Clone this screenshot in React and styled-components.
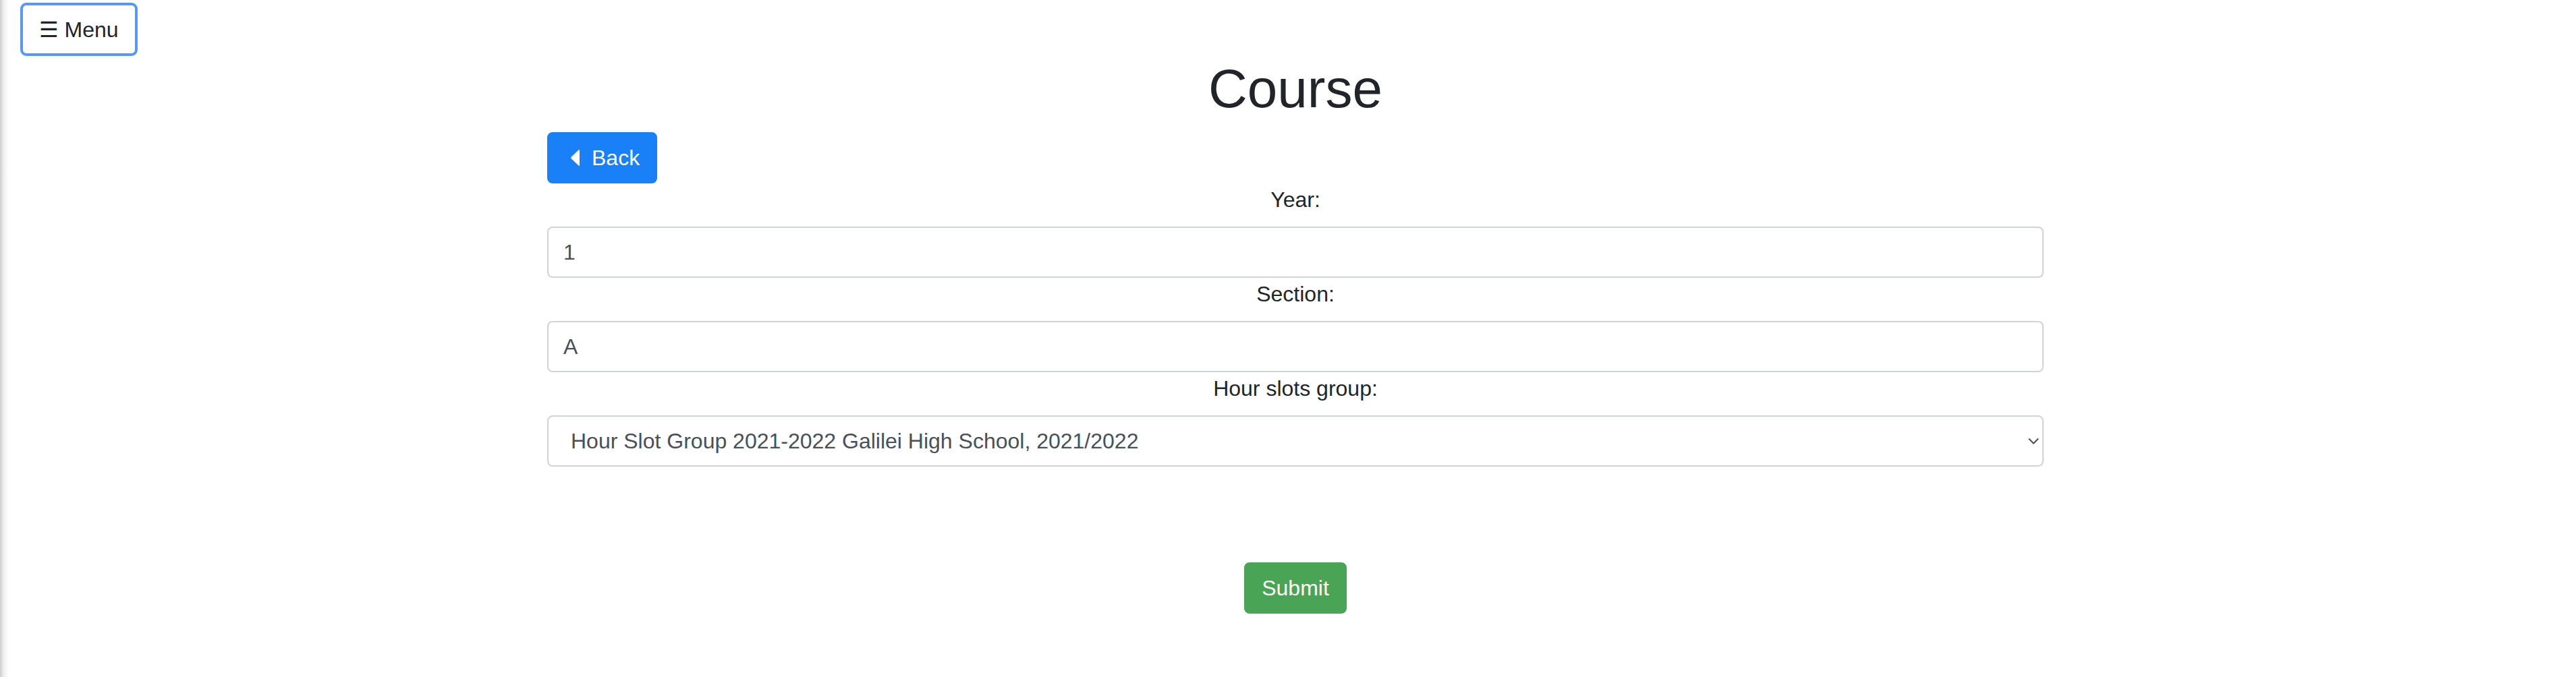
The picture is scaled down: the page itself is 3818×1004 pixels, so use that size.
import React, {useState} from 'react';
import styled, {createGlobalStyle} from 'styled-components';

const GlobalStyle = createGlobalStyle`
  html, body {
    margin: 0;
    background: #fff;
    font-family: "Liberation Sans", Arial, sans-serif;
    color: #212529;
  }
`;

const Page = styled.div`
  height: 1004px;
  overflow: hidden;
  box-sizing: border-box;
  padding: 4px 0 0 22px;
  background: linear-gradient(to right, #cdcdcd 0, #ececec 5px, #fff 12px);
`;

const MenuButton = styled.button`
  display: inline-flex;
  align-items: center;
  gap: 10px;
  margin-left: 8px;
  height: 79px;
  padding: 0 24px;
  border: 4px solid #5797f5;
  border-radius: 9px;
  background: #fff;
  color: #212529;
  font-family: "Liberation Sans", "DejaVu Sans", sans-serif;
  font-size: 32px;
  cursor: pointer;
`;

const Title = styled.h1`
  margin: 1px 0 16px;
  font-size: 80px;
  font-weight: 400;
  line-height: 1.2;
  text-align: center;
`;

const Form = styled.form`
  width: 2218px;
  margin: 0 auto;
`;

const BackButton = styled.button`
  display: inline-flex;
  align-items: center;
  height: 76px;
  padding: 0 24px 0 26px;
  border: 2px solid #1a80f8;
  border-radius: 8px;
  background: #1a80f8;
  color: #fff;
  font-family: "Liberation Sans", Arial, sans-serif;
  font-size: 32px;
  cursor: pointer;

  svg {
    margin-right: 16px;
  }
`;

const Label = styled.label`
  display: block;
  text-align: center;
  font-size: 32px;
  line-height: 48px;
  margin-bottom: 16px;
`;

const TextInput = styled.input`
  display: block;
  box-sizing: border-box;
  width: 100%;
  height: 76px;
  padding: 0 14px 0 22px;
  border: 2px solid #ced4da;
  border-radius: 8px;
  font-family: "Liberation Sans", Arial, sans-serif;
  font-size: 32px;
  color: #495057;
  background: #fff;
  outline: none;
`;

const SelectWrap = styled.div`
  position: relative;
`;

const Select = styled.select`
  display: block;
  box-sizing: border-box;
  width: 100%;
  height: 76px;
  padding: 0 48px 0 33px;
  border: 2px solid #ced4da;
  border-radius: 8px;
  font-family: "Liberation Sans", Arial, sans-serif;
  font-size: 32px;
  color: #495057;
  background: #fff;
  appearance: none;
  outline: none;
`;

const Chevron = styled.svg`
  position: absolute;
  right: 7px;
  top: 33px;
  pointer-events: none;
`;

const SubmitRow = styled.div`
  margin-top: 142px;
  text-align: center;
`;

const SubmitButton = styled.button`
  height: 76px;
  padding: 0 24px;
  border: 2px solid #49a455;
  border-radius: 8px;
  background: #49a455;
  color: #fff;
  font-family: "Liberation Sans", Arial, sans-serif;
  font-size: 32px;
  cursor: pointer;
`;

const App = () => {
  const [year, setYear] = useState('1');
  const [section, setSection] = useState('A');
  const [group, setGroup] = useState('1');

  return (
    <Page>
      <GlobalStyle />
      <MenuButton>☰ Menu</MenuButton>
      <Title>Course</Title>
      <Form onSubmit={(evt) => evt.preventDefault()}>
        <BackButton type="button">
          <svg width="22" height="24" viewBox="0 0 22 24">
            <path d="M20 1 L20 23 Q20 25 18 23 L8 13.5 Q6.5 12 8 10.5 L18 1 Q20 -1 20 1 Z" fill="#fff" />
          </svg>
          Back
        </BackButton>
        <Label htmlFor="year">Year:</Label>
        <TextInput id="year" value={year} onChange={(evt) => setYear(evt.target.value)} />
        <Label htmlFor="section">Section:</Label>
        <TextInput id="section" value={section} onChange={(evt) => setSection(evt.target.value)} />
        <Label htmlFor="group">Hour slots group:</Label>
        <SelectWrap>
          <Select id="group" value={group} onChange={(evt) => setGroup(evt.target.value)}>
            <option value="1">Hour Slot Group 2021-2022 Galilei High School, 2021/2022</option>
          </Select>
          <Chevron width="16" height="10" viewBox="0 0 16 10">
            <path d="M1 1.5 L8 8.5 L15 1.5" fill="none" stroke="#4a4f55" strokeWidth="2" />
          </Chevron>
        </SelectWrap>
        <SubmitRow>
          <SubmitButton type="submit">Submit</SubmitButton>
        </SubmitRow>
      </Form>
    </Page>
  );
};

export default App;
